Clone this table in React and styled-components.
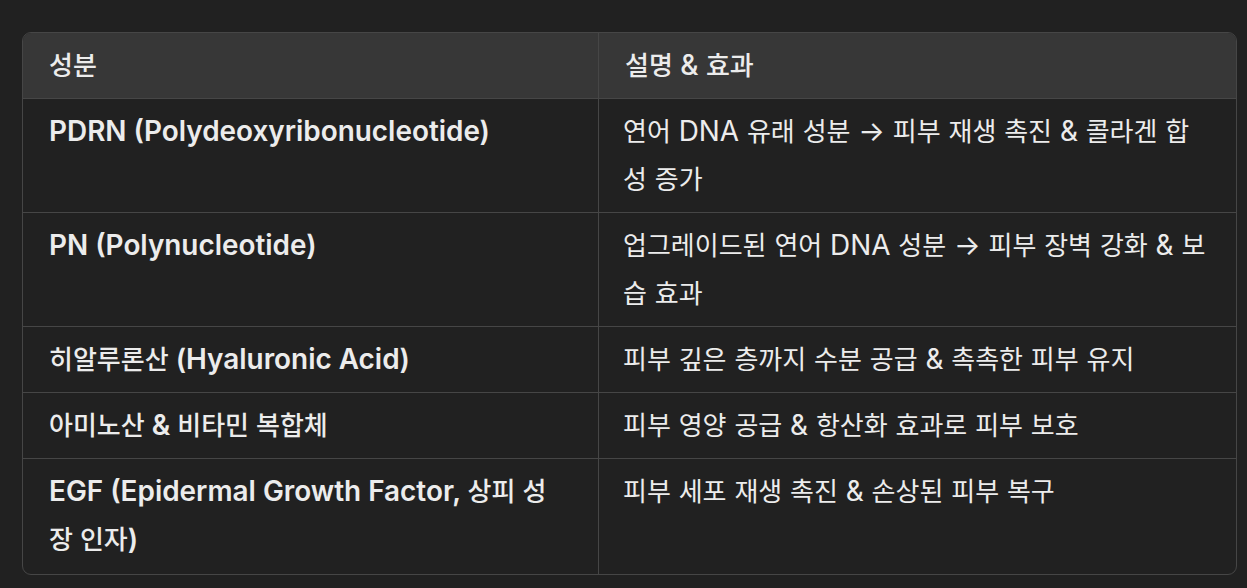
import styled, { createGlobalStyle } from "styled-components";

const GlobalStyle = createGlobalStyle`
  html, body {
    margin: 0;
    padding: 0;
    background: #212121;
  }
  body {
    font-family: "Inter", "Noto Sans CJK KR", sans-serif;
    color: #ececec;
  }
`;

const rows = [
  ["PDRN (Polydeoxyribonucleotide)", "연어 DNA 유래 성분 → 피부 재생 촉진 & 콜라겐 합성 증가"],
  ["PN (Polynucleotide)", "업그레이드된 연어 DNA 성분 → 피부 장벽 강화 & 보습 효과"],
  ["히알루론산 (Hyaluronic Acid)", "피부 깊은 층까지 수분 공급 & 촉촉한 피부 유지"],
  ["아미노산 & 비타민 복합체", "피부 영양 공급 & 항산화 효과로 피부 보호"],
  ["EGF (Epidermal Growth Factor, 상피 성장 인자)", "피부 세포 재생 촉진 & 손상된 피부 복구"],
];

// latin runs are set a bit larger so they sit like the system font next to hangul
const Mixed = ({ text }) =>
  text.split(/([\x00-\x7F→]+)/).filter(Boolean).map((part, i) =>
    /[\uAC00-\uD7A3]/.test(part) ? <Hangul key={i}>{part}</Hangul> : <Latin key={i}>{part}</Latin>
  );

const App = () => {
  return (
    <Page>
      <GlobalStyle />
      <Table>
        <HeadCell><Mixed text="성분" /></HeadCell>
        <HeadCell last><Mixed text="설명 & 효과" /></HeadCell>
        {rows.map(([name, desc], i) => (
          <>
            <NameCell key={"n" + i} bottom={i === rows.length - 1}><Mixed text={name} /></NameCell>
            <DescCell key={"d" + i} bottom={i === rows.length - 1}><Mixed text={desc} /></DescCell>
          </>
        ))}
      </Table>
    </Page>
  );
};

const Page = styled.div`
  padding: 32px 10px 15px 22px;
`;

const Table = styled.div`
  display: grid;
  grid-template-columns: 576px 1fr;
  border: 1px solid #464646;
  border-radius: 9px;
  overflow: hidden;
`;

const Hangul = styled.span`
  font-size: 26px;
  line-height: 1;
`;

const Latin = styled.span`
  font-size: 27.9px;
  line-height: 1;
`;

const Cell = styled.div`
  padding: 9px 28px ${(p) => (p.bottom ? "10px" : "8px")} 26px;
  font-size: 26px;
  line-height: 48px;
  border-bottom: ${(p) => (p.bottom ? "none" : "1px solid #464646")};
`;

const HeadCell = styled(Cell)`
  background: #373737;
  font-weight: 500;
  border-right: ${(p) => (p.last ? "none" : "1px solid #464646")};
`;

const NameCell = styled(Cell)`
  font-weight: 600;
  padding-right: 32px;
  border-right: 1px solid #464646;
  ${Hangul} {
    font-weight: 500;
  }
`;

const DescCell = styled(Cell)`
  font-weight: 400;
  padding-left: 24px;
`;

export default App;
